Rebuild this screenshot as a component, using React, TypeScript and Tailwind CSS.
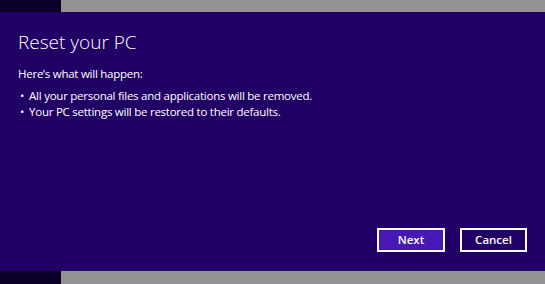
export default function App() {
  return (
    <div className="flex h-[284px] w-[545px] flex-col overflow-hidden font-['Open_Sans',sans-serif] text-white">
      <div className="flex h-[12px]">
        <div className="w-[61px] bg-[#0b0027]" />
        <div className="flex-1 bg-[#939393]" />
      </div>

      <div className="flex flex-1 flex-col bg-[#200064] px-[18px]">
        <h1 className="mt-[16px] text-[19px] font-light leading-[28px]">Reset your PC</h1>
        <p className="mt-[10px] text-[11.5px] leading-[16px] tracking-[-0.25px]">Here’s what will happen:</p>
        <ul className="mt-[6px] text-[11.5px] leading-[16px] tracking-[-0.25px]">
          <li className="flex gap-[5px] pl-[2px]">
            <span>•</span>
            <span>All your personal files and applications will be removed.</span>
          </li>
          <li className="flex gap-[5px] pl-[2px]">
            <span>•</span>
            <span>Your PC settings will be restored to their defaults.</span>
          </li>
        </ul>

        <div className="mt-auto mb-[19px] flex justify-end gap-[15px]">
          <button className="h-[24px] w-[68px] border-2 border-white bg-[#4619b5] text-[11.5px] font-semibold">
            Next
          </button>
          <button className="h-[24px] w-[67px] border-2 border-white bg-[#200064] text-[11.5px] font-semibold">
            Cancel
          </button>
        </div>
      </div>

      <div className="flex h-[13px]">
        <div className="w-[61px] bg-[#0b0027]" />
        <div className="flex-1 bg-[#939393]" />
      </div>
    </div>
  );
}
